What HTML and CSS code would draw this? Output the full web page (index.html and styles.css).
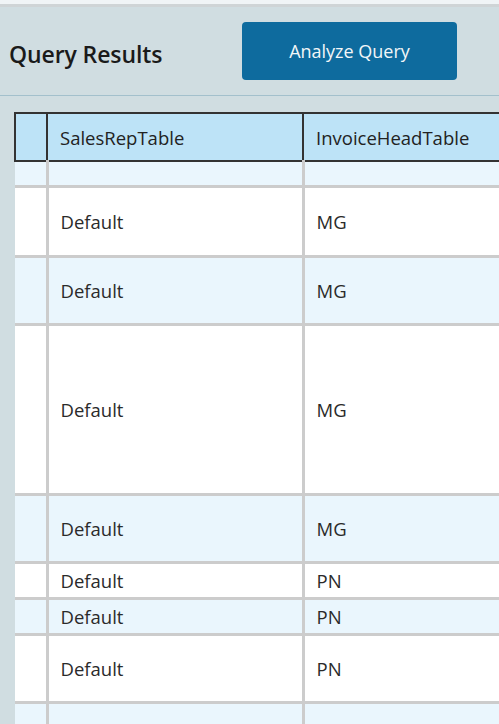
FILE: index.html
```html
<!DOCTYPE html>
<html>
<head>
<meta charset="utf-8">
<link rel="stylesheet" href="styles.css">
</head>
<body>
<div class="topstrip"></div>
<div class="toolbar">
  <h1 class="title">Query Results</h1>
  <button class="btn">Analyze Query</button>
</div>
<div class="content">
  <table class="grid">
    <thead>
      <tr><th class="idx"></th><th class="c1">SalesRepTable</th><th class="c2">InvoiceHeadTable</th></tr>
    </thead>
    <tbody>
      <tr class="r-alt h23"><td class="idx"></td><td></td><td></td></tr>
      <tr class="h67"><td class="idx"></td><td>Default</td><td>MG</td></tr>
      <tr class="r-alt h65"><td class="idx"></td><td>Default</td><td>MG</td></tr>
      <tr class="h167"><td class="idx"></td><td>Default</td><td>MG</td></tr>
      <tr class="r-alt h65"><td class="idx"></td><td>Default</td><td>MG</td></tr>
      <tr class="h33"><td class="idx"></td><td>Default</td><td>PN</td></tr>
      <tr class="r-alt h33"><td class="idx"></td><td>Default</td><td>PN</td></tr>
      <tr class="h65"><td class="idx"></td><td>Default</td><td>PN</td></tr>
      <tr class="r-alt h65"><td class="idx"></td><td></td><td></td></tr>
    </tbody>
  </table>
</div>
</body>
</html>
```
FILE: styles.css
```css
html, body {
  margin: 0;
  padding: 0;
  height: 100%;
  overflow: hidden;
  background: #d0dde1;
  font-family: "Open Sans", "Noto Sans", sans-serif;
}
.topstrip {
  height: 4px;
  background: #f0f4f6;
  border-bottom: 3px solid #cfd4d6;
}
.toolbar {
  height: 89px;
  display: flex;
  align-items: flex-start;
  padding-left: 9px;
  border-bottom: 1px solid #a3c0cc;
  box-sizing: border-box;
}
.title {
  margin: 33px 0 0 0;
  font-size: 23px;
  line-height: 28px;
  font-weight: 600;
  color: #1a1a1a;
  width: 233px;
  letter-spacing: -0.1px;
}
.btn {
  width: 215px;
  height: 58px;
  margin-top: 15px;
  background: #0e6b9e;
  color: #f2f6f8;
  border: none;
  border-radius: 4px;
  font-family: inherit;
  font-size: 18px;
  font-weight: 500;
  padding: 0;
}
.content {
  padding: 16px 0 0 14px;
  overflow: hidden;
}
.grid {
  border-collapse: collapse;
  table-layout: fixed;
  width: 520px;
  font-size: 18.5px;
  color: #2a2a2a;
}
.grid th {
  background: #bde3f7;
  border: 2px solid #333;
  height: 46px;
  text-align: left;
  font-weight: 500;
  padding: 0 0 0 12px;
  color: #222;
}
.grid th.idx { width: 30px; padding: 0; }
.grid th.c1 { width: 242px; }
.grid td {
  border: 3px solid #cccccc;
  border-top: none;
  background: #fff;
  padding: 0 0 0 12px;
  vertical-align: middle;
}
.grid tbody tr td { border-bottom: 3px solid #cccccc; }
.grid td.idx { padding: 0; border-left: none; }
.grid tr.r-alt td { background: #eaf6fd; }
.h23 td { height: 23px; }
.h33 td { height: 33px; }
.h65 td { height: 65px; }
.h67 td { height: 67px; }
.h167 td { height: 167px; }
```
